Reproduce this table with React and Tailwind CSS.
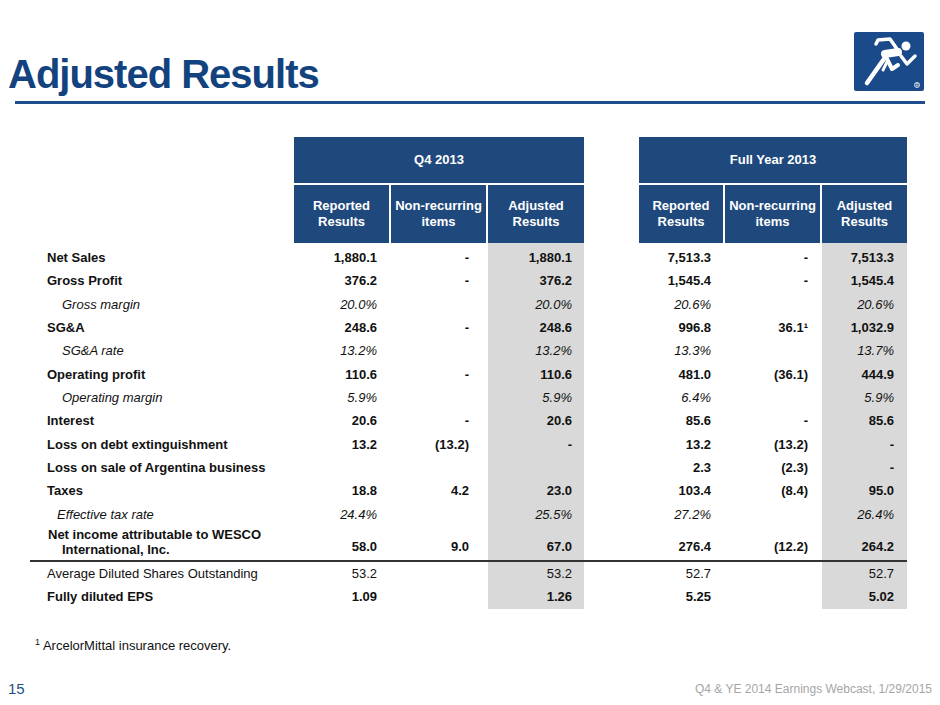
import React from "react";

const rows = [
  { label: "Net Sales", t: "b", v: ["1,880.1", "-", "1,880.1", "7,513.3", "-", "7,513.3"] },
  { label: "Gross Profit", t: "b", v: ["376.2", "-", "376.2", "1,545.4", "-", "1,545.4"] },
  { label: "Gross margin", t: "i", v: ["20.0%", "", "20.0%", "20.6%", "", "20.6%"] },
  { label: "SG&A", t: "b", v: ["248.6", "-", "248.6", "996.8", "36.1\u00b9", "1,032.9"] },
  { label: "SG&A rate", t: "i", v: ["13.2%", "", "13.2%", "13.3%", "", "13.7%"] },
  { label: "Operating profit", t: "b", v: ["110.6", "-", "110.6", "481.0", "(36.1)", "444.9"] },
  { label: "Operating margin", t: "i", v: ["5.9%", "", "5.9%", "6.4%", "", "5.9%"] },
  { label: "Interest", t: "b", v: ["20.6", "-", "20.6", "85.6", "-", "85.6"] },
  { label: "Loss on debt extinguishment", t: "b", v: ["13.2", "(13.2)", "-", "13.2", "(13.2)", "-"] },
  { label: "Loss on sale of Argentina business", t: "b", v: ["", "", "", "2.3", "(2.3)", "-"] },
  { label: "Taxes", t: "b", v: ["18.8", "4.2", "23.0", "103.4", "(8.4)", "95.0"] },
  { label: "Effective tax rate", t: "e", v: ["24.4%", "", "25.5%", "27.2%", "", "26.4%"] },
  { label: "NI", t: "ni", v: ["58.0", "9.0", "67.0", "276.4", "(12.2)", "264.2"] },
  { label: "Average Diluted Shares Outstanding", t: "n", v: ["53.2", "", "53.2", "52.7", "", "52.7"] },
  { label: "Fully diluted EPS", t: "b", v: ["1.09", "", "1.26", "5.25", "", "5.02"] },
];

const padR = ["pr-[14px]", "pr-[19px]", "pr-[12px]", "pr-[14px]", "pr-[14px]", "pr-[13px]"];
const gray = [false, false, true, false, false, true];

function Logo() {
  return (
    <svg width="70" height="59" viewBox="0 0 70 59" className="block">
      <rect x="0" y="0" width="70" height="59" rx="2" fill="#1b4a8a" />
      <g stroke="#fff" strokeLinecap="round" strokeLinejoin="round" fill="none">
        <path d="M22 12 L24 8 L36 7 L43 17" strokeWidth="3.5" />
        <path d="M31 22 L44 20" strokeWidth="8" />
        <path d="M47 24 L53 32 L61 24" strokeWidth="3.5" />
        <path d="M30 27 L13 51" strokeWidth="4.5" />
        <path d="M33 27 L38 37 L44 33" strokeWidth="4" />
        <path d="M33 30 L29 38" strokeWidth="3" />
      </g>
      <circle cx="52" cy="14" r="4.5" fill="#fff" />
      <circle cx="63" cy="53" r="2.6" fill="none" stroke="#fff" strokeWidth="0.7" />
      <text x="63" y="54.8" fontSize="4.5" fill="#fff" textAnchor="middle" fontFamily="Liberation Sans, sans-serif">R</text>
    </svg>
  );
}

function Row({ r }) {
  const isNI = r.t === "ni";
  const h = isNI ? "h-[36px] border-b-2 border-[#333]" : "h-[23.33px]";
  const align = isNI ? "items-end pb-[3px]" : "items-center";
  const valStyle =
    r.t === "i" || r.t === "e" ? "italic font-normal" : r.t === "n" ? "font-normal" : "font-bold";
  let label;
  if (isNI) {
    label = (
      <div className="flex flex-col leading-[15px] font-bold">
        <span className="pl-[18px]">Net income attributable to WESCO</span>
        <span className="pl-[32px]">International, Inc.</span>
      </div>
    );
  } else if (r.t === "i") {
    label = <span className="pl-[32px] italic">{r.label}</span>;
  } else if (r.t === "e") {
    label = <span className="pl-[27px] italic">{r.label}</span>;
  } else if (r.t === "n") {
    label = <span className="pl-[17px]">{r.label}</span>;
  } else {
    label = <span className="pl-[17px] font-bold">{r.label}</span>;
  }
  const cells = [];
  cells.push(
    <div key="l" className={`${h} flex ${align}`}>
      {label}
    </div>
  );
  r.v.forEach((val, i) => {
    if (i === 3) cells.push(<div key="sp" className={`${h}`} />);
    cells.push(
      <div
        key={i}
        className={`${h} flex ${align} justify-end ${padR[i]} ${valStyle} ${gray[i] ? "bg-[#d9d9d9]" : ""}`}
      >
        {val}
      </div>
    );
  });
  return <>{cells}</>;
}

export default function App() {
  return (
    <div className="w-[940px] h-[705px] bg-white overflow-hidden font-['Liberation_Sans',Arial,sans-serif] text-[#111]">
      <div className="h-[101px] flex justify-between items-start">
        <div className="mt-[54px] ml-[8px] text-[40px] leading-none font-bold text-[#13437f] tracking-[-1px]">
          Adjusted Results
        </div>
        <div className="mt-[32px] mr-[16px]">
          <Logo />
        </div>
      </div>
      <div className="mx-[15px] h-[3px] bg-[#1f4e8c]" />

      <div className="mt-[33px] ml-[30px] grid grid-cols-[264px_97px_97px_96px_55px_86px_97px_85px] text-[13px]">
        <div />
        <div className="col-span-3 h-[48px] border-b-2 border-white bg-[#1f497d] text-white font-bold flex items-center justify-center">
          Q4 2013
        </div>
        <div />
        <div className="col-span-3 h-[48px] border-b-2 border-white bg-[#1f497d] text-white font-bold flex items-center justify-center">
          Full Year 2013
        </div>
        <div />
        <div className="h-[58px] border-r-2 border-white bg-[#1f497d] text-white font-bold flex items-center justify-center text-center leading-[16px]">
          Reported<br />Results
        </div>
        <div className="h-[58px] border-r-2 border-white bg-[#1f497d] text-white font-bold flex items-center justify-center text-center leading-[16px]">
          Non-recurring<br />items
        </div>
        <div className="h-[58px] bg-[#1f497d] text-white font-bold flex items-center justify-center text-center leading-[16px]">
          Adjusted<br />Results
        </div>
        <div />
        <div className="h-[58px] border-r-2 border-white bg-[#1f497d] text-white font-bold flex items-center justify-center text-center leading-[16px]">
          Reported<br />Results
        </div>
        <div className="h-[58px] border-r-2 border-white bg-[#1f497d] text-white font-bold flex items-center justify-center text-center leading-[16px]">
          Non-recurring<br />items
        </div>
        <div className="h-[58px] bg-[#1f497d] text-white font-bold flex items-center justify-center text-center leading-[16px]">
          Adjusted<br />Results
        </div>
        <div className="h-[3px]" />
        <div className="h-[3px]" />
        <div className="h-[3px]" />
        <div className="h-[3px] bg-[#d9d9d9]" />
        <div className="h-[3px]" />
        <div className="h-[3px]" />
        <div className="h-[3px]" />
        <div className="h-[3px] bg-[#d9d9d9]" />
        {rows.map((r, i) => (
          <Row key={i} r={r} />
        ))}
      </div>

      <div className="mt-[27px] ml-[35px] text-[13px] text-[#111]">
        <span className="text-[9px] align-top">1</span> ArcelorMittal insurance recovery.
      </div>

      <div className="mt-[23px] flex justify-between items-center px-[8px]">
        <span className="text-[15px] text-[#1f4e8c]">15</span>
        <span className="text-[12px] text-[#a6a6a6]">Q4 &amp; YE 2014 Earnings Webcast, 1/29/2015</span>
      </div>
    </div>
  );
}
